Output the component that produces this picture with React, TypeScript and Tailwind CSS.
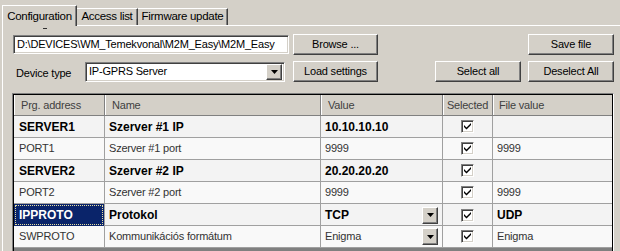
import React from 'react';

type Row = {
  addr: string;
  name: string;
  value: string;
  file: string;
  bold?: boolean;
  combo?: boolean;
  focused?: boolean;
};

const rows: Row[] = [
  { addr: 'SERVER1', name: 'Szerver #1 IP', value: '10.10.10.10', file: '', bold: true },
  { addr: 'PORT1', name: 'Szerver #1 port', value: '9999', file: '9999' },
  { addr: 'SERVER2', name: 'Szerver #2 IP', value: '20.20.20.20', file: '', bold: true },
  { addr: 'PORT2', name: 'Szerver #2 port', value: '9999', file: '9999' },
  { addr: 'IPPROTO', name: 'Protokol', value: 'TCP', file: 'UDP', bold: true, combo: true, focused: true },
  { addr: 'SWPROTO', name: 'Kommunikációs formátum', value: 'Enigma', file: 'Enigma', combo: true },
];

const raised =
  'bg-[#d4d0c8] border border-t-white border-l-white border-r-[#404040] border-b-[#404040] shadow-[inset_-1px_-1px_0_#808080]';
const sunken =
  'bg-white border border-t-[#808080] border-l-[#808080] border-r-white border-b-white shadow-[inset_1px_1px_0_#404040,inset_-1px_-1px_0_#d4d0c8]';

const Arrow = () => (
  <svg width="7" height="4" viewBox="0 0 7 4">
    <path d="M0 0h7L3.5 4z" fill="#000" />
  </svg>
);

const Button: React.FC<{ children: React.ReactNode; className?: string }> = ({ children, className = '' }) => (
  <button className={`${raised} h-[21px] flex items-center justify-center text-[11px] text-black tracking-[-0.2px] ${className}`}>
    {children}
  </button>
);

const Checkbox = () => (
  <div className={`${sunken} w-[13px] h-[13px] flex items-center justify-center`}>
    <svg width="7" height="7" viewBox="0 0 7 7">
      <path d="M0 2l2.5 2.5L7 0v2L2.5 6.5 0 4z" fill="#000" />
    </svg>
  </div>
);

const ComboBtn = () => (
  <div className={`${raised} w-[16px] h-[17px] flex items-center justify-center`}>
    <Arrow />
  </div>
);

export default function App() {
  return (
    <div className="w-[620px] h-[251px] overflow-hidden bg-[#d4d0c8] font-['Liberation_Sans',Arial,sans-serif] text-[11px] text-black">
      {/* tabs */}
      <div className="flex items-end h-[25px] pl-[2px]">
        <div className="relative z-10 -mb-px h-[21px] w-[75px] bg-[#d4d0c8] border-t border-l border-white border-r border-r-[#404040] shadow-[inset_-1px_0_0_#808080] flex items-start justify-center pt-[2px] text-[11.5px] tracking-[-0.3px]">
          Configuration
          <span className="absolute left-[40px] top-[22px] w-[4px] h-px bg-[#303030]" />
        </div>
        <div className="h-[17px] w-[61px] border-t border-white border-r border-r-[#404040] shadow-[inset_-1px_0_0_#808080] flex items-center justify-center tracking-[-0.3px] text-[11.5px]">
          Access list
        </div>
        <div className="h-[17px] w-[90px] border-t border-white border-r border-r-[#404040] shadow-[inset_-1px_0_0_#808080] flex items-center justify-center tracking-[-0.3px] text-[11.5px]">
          Firmware update
        </div>
      </div>

      {/* page */}
      <div className="ml-[2px] border-t border-l border-white h-[226px] pl-[10px] pr-[6px] pt-[8px]">
        <div className="flex items-center h-[21px]">
          <div className={`${sunken} w-[276px] h-[19px] flex items-center pl-[3px] overflow-hidden whitespace-nowrap tracking-[-0.2px]`}>
            D:\DEVICES\WM_Temekvonal\M2M_Easy\M2M_Easy
          </div>
          <Button className="ml-[4px] w-[85px]">Browse ...</Button>
          <div className="flex-1" />
          <Button className="w-[86px]">Save file</Button>
        </div>

        <div className="flex items-center h-[21px] mt-[6px]">
          <span className="w-[72px] pl-[3px] pt-[3px] tracking-[-0.2px]">Device type</span>
          <div className={`${sunken} w-[200px] h-[20px] flex items-center justify-between pl-[3px] pr-[2px]`}>
            <span className="tracking-[-0.2px]">IP-GPRS Server</span>
            <div className={`${raised} w-[16px] h-[16px] flex items-center justify-center`}>
              <Arrow />
            </div>
          </div>
          <Button className="ml-[8px] w-[85px]">Load settings</Button>
          <div className="flex-1" />
          <Button className="w-[86px]">Select all</Button>
          <Button className="ml-[7px] w-[86px]">Deselect All</Button>
        </div>

        {/* grid */}
        <div className="-ml-px mt-[11px] w-[602px] h-[170px] border border-t-[#808080] border-l-[#808080] border-r-white border-b-white">
          <div className="h-full border border-black bg-[#808080] flex flex-col">
            <div className="grid grid-cols-[91px_216px_122px_50px_119px] h-[21px] border-b border-[#808080] bg-[#d4d0c8] text-[#404040] tracking-[-0.2px]">
              <div className="flex items-center pl-[7px] border-r border-[#808080] shadow-[inset_1px_0_0_white]">Prg. address</div>
              <div className="flex items-center pl-[7px] border-r border-[#808080] shadow-[inset_1px_0_0_white]">Name</div>
              <div className="flex items-center pl-[7px] border-r border-[#808080] shadow-[inset_1px_0_0_white]">Value</div>
              <div className="flex items-center justify-center border-r border-[#808080] shadow-[inset_1px_0_0_white]">Selected</div>
              <div className="flex items-center pl-[6px] shadow-[inset_1px_0_0_white]">File value</div>
            </div>
            {rows.map((r) => {
              const txt = r.bold ? 'font-bold text-[12px] text-black' : 'text-[11px] text-[#333] tracking-[-0.2px]';
              const bg = r.bold ? 'bg-[#f3f3f3]' : 'bg-[#f9f9f9]';
              return (
                <div key={r.addr} className={`grid grid-cols-[91px_216px_122px_50px_119px] h-[22px] border-b border-[#a0a0a0] ${bg}`}>
                  {r.focused ? (
                    <div className="border-r border-[#a0a0a0] bg-[#0a246a] p-px">
                      <div className="h-full border border-dotted border-[#e8e0a0] flex items-center pl-[3px] font-bold text-[12px] text-white">
                        {r.addr}
                      </div>
                    </div>
                  ) : (
                    <div className={`flex items-center pl-[5px] border-r border-[#a0a0a0] ${txt}`}>{r.addr}</div>
                  )}
                  <div className={`flex items-center pl-[4px] border-r border-[#a0a0a0] ${txt}`}>{r.name}</div>
                  <div className={`flex items-center justify-between pl-[4px] pr-[4px] border-r border-[#a0a0a0] ${txt}`}>
                    <span>{r.value}</span>
                    {r.combo && <ComboBtn />}
                  </div>
                  <div className="flex items-center justify-center pl-[1px] pr-[2px] border-r border-[#a0a0a0]">
                    <Checkbox />
                  </div>
                  <div className={`flex items-center pl-[4px] ${txt}`}>{r.file}</div>
                </div>
              );
            })}
          </div>
        </div>
      </div>
    </div>
  );
}
